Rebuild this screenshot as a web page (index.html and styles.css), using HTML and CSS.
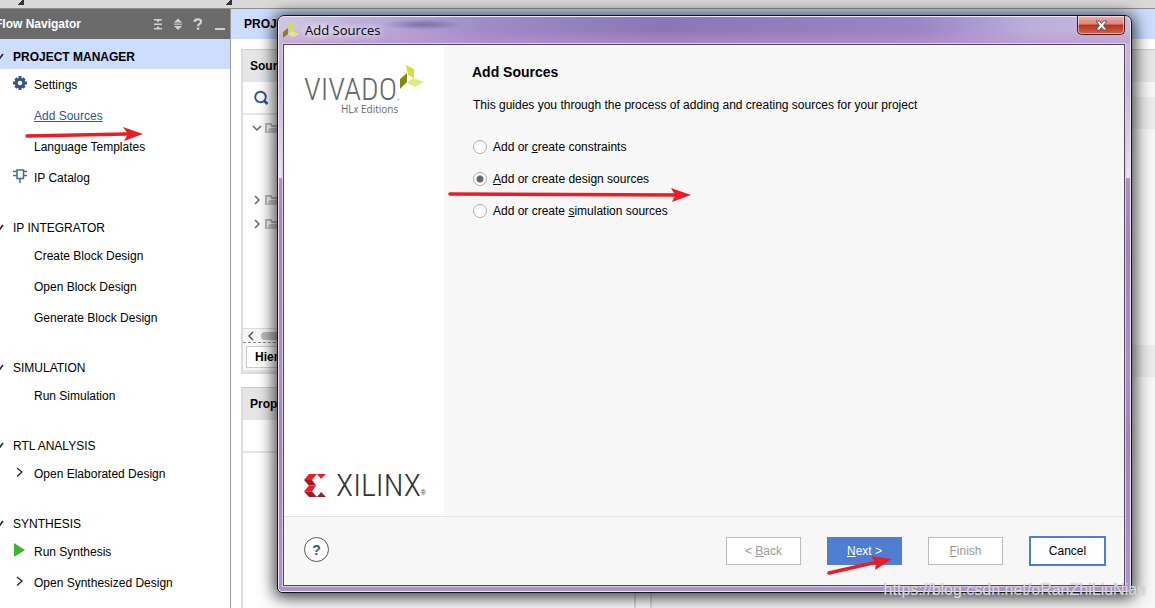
FILE: index.html
```
<!DOCTYPE html>
<html lang="en">
<head>
    <meta charset="UTF-8">
    <meta name="viewport" content="width=device-width, initial-scale=1.0">
    <title>Add Sources</title>
    <link rel="stylesheet" href="styles.css">
</head>
<body>
    <div class="toolstrip">
        <span class="grip grip-a"></span>
        <span class="grip grip-b"></span>
    </div>
    <div class="app">
        <nav class="flow">
            <div class="flow-title">
                <h2>Flow Navigator</h2>
                <svg width="72" height="16" viewBox="0 0 72 16" fill="#d2d2d2">
                    <path d="M1 3h8v1.500H6.500L5 6.500 3.500 4.500H1zM1 7.500h8v1.500H1zM1 13.500h8V12H6.500L5 10 3.500 12H1z"/>
                    <path d="M21 6.500l4-4 4 4zM21 10h8l-4 4z"/>
                    <path d="M21 7.500h8v1.500h-8z" fill="#b5b5b5"/>
                    <path d="M41.500 6q0-2.700 3.300-2.700T48 5.800q0 1.500-1.800 2.400-1.200.6-1.200 2" fill="none" stroke="#d2d2d2" stroke-width="2.200"/>
                    <path d="M43.800 11.500h2.400v2.200h-2.400zM62 12h10v2H62z"/>
                </svg>
            </div>
            <section class="group">
                <h3 class="active"><svg width="4" height="8" viewBox="0 0 4 8"><path d="M-2 3L0 5 3 1" fill="none" stroke="#222" stroke-width="1.600"/></svg>PROJECT MANAGER</h3>
                <ul>
                    <li>
                        <svg class="ico" width="14" height="14" viewBox="0 0 14 14"><g fill="#34548a"><circle cx="7" cy="7" r="5.200"/><path d="M5.500 0h3v14h-3zM0 5.500h14v3H0z"/><path d="M5.500 0.500h3v13h-3zM0.500 5.500h13v3h-13z" transform="rotate(45 7 7)"/></g><circle cx="7" cy="7" r="2.300" fill="#fff"/></svg>
                        <span>Settings</span>
                    </li>
                    <li><a href="#">Add Sources</a></li>
                    <li><span>Language Templates</span></li>
                    <li>
                        <svg class="ico" width="14" height="14" viewBox="0 0 14 14" fill="none" stroke="#4a6796"><path d="M4 1h6.500v8.500H4z" stroke-width="1.500"/><path d="M0 2.500h4M0 6.500h4M10.500 2.500H14M10.500 6.500H14M7 9.500V14" stroke-width="1.500"/></svg>
                        <span>IP Catalog</span>
                    </li>
                </ul>
            </section>
            <section class="group">
                <h3><svg width="4" height="8" viewBox="0 0 4 8"><path d="M-2 3L0 5 3 1" fill="none" stroke="#222" stroke-width="1.600"/></svg>IP INTEGRATOR</h3>
                <ul>
                    <li><span>Create Block Design</span></li>
                    <li><span>Open Block Design</span></li>
                    <li><span>Generate Block Design</span></li>
                </ul>
            </section>
            <section class="group">
                <h3><svg width="4" height="8" viewBox="0 0 4 8"><path d="M-2 3L0 5 3 1" fill="none" stroke="#222" stroke-width="1.600"/></svg>SIMULATION</h3>
                <ul>
                    <li><span>Run Simulation</span></li>
                </ul>
            </section>
            <section class="group">
                <h3><svg width="4" height="8" viewBox="0 0 4 8"><path d="M-2 3L0 5 3 1" fill="none" stroke="#222" stroke-width="1.600"/></svg>RTL ANALYSIS</h3>
                <ul>
                    <li>
                        <svg class="ico" width="14" height="14" viewBox="0 0 14 14"><path d="M4 3l5 4-5 4.500" fill="none" stroke="#222" stroke-width="1.300"/></svg>
                        <span>Open Elaborated Design</span>
                    </li>
                </ul>
            </section>
            <section class="group">
                <h3><svg width="4" height="8" viewBox="0 0 4 8"><path d="M-2 3L0 5 3 1" fill="none" stroke="#222" stroke-width="1.600"/></svg>SYNTHESIS</h3>
                <ul>
                    <li>
                        <svg class="ico" width="14" height="14" viewBox="0 0 14 14"><path d="M1 0l11 7-11 7z" fill="#3fb32f"/></svg>
                        <span>Run Synthesis</span>
                    </li>
                    <li>
                        <svg class="ico" width="14" height="14" viewBox="0 0 14 14"><path d="M4 3l5 4-5 4.500" fill="none" stroke="#222" stroke-width="1.300"/></svg>
                        <span>Open Synthesized Design</span>
                    </li>
                </ul>
            </section>
        </nav>

        <main class="work">
            <h1 class="work-title">PROJECT MANAGER</h1>
            <div class="panes">
                <div class="left-panes">
                    <section class="pane sources">
                        <h2>Sources</h2>
                        <div class="pane-tools">
                            <svg width="16" height="16" viewBox="0 0 16 16" fill="none" stroke="#34548a"><circle cx="7.500" cy="7" r="5.300" stroke-width="1.900"/><path d="M11 10.500l3.500 3.500" stroke-width="2.600"/></svg>
                        </div>
                        <div class="tree">
                            <svg class="open" width="26" height="12" viewBox="0 0 26 12"><path d="M2 4l4 4 4-4" fill="none" stroke="#666" stroke-width="1.500"/><path d="M15 11V2h5l1 2h6" fill="none" stroke="#bbb" stroke-width="2"/><path d="M16 11l2-5h9v5z" fill="#ccc"/></svg>
                            <svg width="26" height="12" viewBox="0 0 26 12"><path d="M4 2l4 4-4 4" fill="none" stroke="#666" stroke-width="1.500"/><path d="M15 11V2h5l1 2h6" fill="none" stroke="#bbb" stroke-width="2"/><path d="M16 11l2-5h9v5z" fill="#ccc"/></svg>
                            <svg width="26" height="12" viewBox="0 0 26 12"><path d="M4 2l4 4-4 4" fill="none" stroke="#666" stroke-width="1.500"/><path d="M15 11V2h5l1 2h6" fill="none" stroke="#bbb" stroke-width="2"/><path d="M16 11l2-5h9v5z" fill="#ccc"/></svg>
                        </div>
                        <div class="scroll">
                            <svg width="6" height="10" viewBox="0 0 6 10"><path d="M5 1L1 5l4 4" fill="none" stroke="#555" stroke-width="1.500"/></svg>
                            <span class="thumb"></span>
                        </div>
                        <div class="tabs"><span class="tab">Hierarchy</span></div>
                    </section>
                    <section class="pane props">
                        <h2>Properties</h2>
                        <div class="pane-tools"></div>
                    </section>
                </div>
                <section class="pane summary">
                    <h2></h2>
                    <div class="band"></div>
                    <div class="band low"></div>
                </section>
            </div>
        </main>
    </div>

    <div class="dialog" role="dialog" aria-labelledby="dlg-title">
        <header class="titlebar">
            <svg width="16" height="16" viewBox="0 0 16 16"><path d="M5 0l5 3v6L6 7z" fill="#d3df3a"/><path d="M0 10l5-4v6l-5 4z" fill="#858a0c"/><path d="M5 12l4-3 7 3-6 3z" fill="#e2ea7d"/></svg>
            <span id="dlg-title">Add Sources</span>
            <button class="close" aria-label="Close">
                <svg width="13" height="11" viewBox="0 0 13 11"><path d="M1 1h3.500l2 2.500 2-2.500H12L8.500 5.500 12 10H8.500l-2-2.500-2 2.500H1l3.500-4.500z" fill="#f4f4f4" stroke="#555a66"/></svg>
            </button>
        </header>
        <div class="client">
            <div class="wizard">
                <aside class="brand">
                    <div class="vivado">
                        <div class="vivado-name">VIVADO<small>.</small></div>
                        <svg width="24" height="24" viewBox="0 0 24 24"><path d="M6 0l8 4v9l-6-3z" fill="#d3df3a"/><path d="M0 14l7-6v9l-7 7z" fill="#858a0c"/><path d="M7 18l6-5 11 4-9 5z" fill="#e2ea7d"/></svg>
                        <div class="edition">HL<i>x</i> Editions</div>
                    </div>
                    <div class="xilinx">
                        <svg width="22" height="23" viewBox="0 0 22 23"><path d="M5 0h8L8 6H0z" fill="#ed1c24"/><path d="M13 0h9l-5 5z" fill="#ed1c24"/><path d="M0 6h8l4 5.500H5z" fill="#9c1c22"/><path d="M5 11.500h7L8 17.500H0z" fill="#ed1c24"/><path d="M0 17.500h8l5 5.500H5zM17 18l5 5h-9z" fill="#9c1c22"/></svg>
                        <span class="xilinx-name">XILINX</span><small>®</small>
                    </div>
                </aside>
                <form class="step">
                    <h2>Add Sources</h2>
                    <p>This guides you through the process of adding and creating sources for your project</p>
                    <label><input type="radio" name="kind"><span>Add or <u>c</u>reate constraints</span></label>
                    <label><input type="radio" name="kind" checked><span><u>A</u>dd or create design sources</span></label>
                    <label><input type="radio" name="kind"><span>Add or create <u>s</u>imulation sources</span></label>
                </form>
            </div>
            <footer class="actions">
                <button class="help">?</button>
                <button class="btn" disabled>&lt; <u>B</u>ack</button>
                <button class="btn next"><u>N</u>ext &gt;</button>
                <button class="btn" disabled><u>F</u>inish</button>
                <button class="btn cancel">Cancel</button>
            </footer>
        </div>
    </div>

    <!-- red marker arrows -->
    <svg class="mark mark-add" width="120" height="16" viewBox="0 0 120 16"><path d="M2 10L102 8" stroke="#ed1c24" stroke-width="3.500" stroke-linecap="round"/><path d="M98 1l20 7-19 7 4-7z" fill="#ed1c24"/></svg>
    <svg class="mark mark-design" width="244" height="16" viewBox="0 0 244 16"><path d="M2 7L228 8" stroke="#ed1c24" stroke-width="3.500" stroke-linecap="round"/><path d="M223 1l20 7-19 7 3-7z" fill="#ed1c24"/></svg>
    <svg class="mark mark-next" width="66" height="22" viewBox="0 0 66 22"><path d="M2 18L50 7" stroke="#ed1c24" stroke-width="3.500" stroke-linecap="round"/><path d="M44 1l21 3-17 11 1-7z" fill="#ed1c24"/></svg>
    <div class="watermark">https://blog.csdn.net/oRanZhiLiuNian</div>
</body>
</html>
```
FILE: styles.css
```
* {
    box-sizing: border-box;
}
body {
    display: flex;
    flex-direction: column;
    height: 100vh;
    margin: 0;
    overflow: hidden;
    font: 12px/16px "Liberation Sans", Arial, sans-serif;
    color: #000;
    background: #fff;
}
h1, h2, h3, p, ul {
    margin: 0;
    padding: 0;
    font-size: 12px;
}
ul {
    list-style: none;
}
svg {
    display: block;
    flex: none;
}
.toolstrip {
    display: flex;
    flex: none;
    height: 9px;
    background: #dadada;
    border-bottom: 1px solid #8e8e8e;
}
.grip {
    width: 6px;
    height: 5px;
    background: linear-gradient(135deg, transparent 45%, #333 45%);
}
.grip-a {
    margin-left: 18px;
}
.grip-b {
    margin-left: 202px;
}
.app {
    display: flex;
    flex: 1;
    min-height: 0;
}

/* flow navigator */
.flow {
    width: 231px;
    flex: none;
    overflow: hidden;
    border-right: 1px solid #999;
}
.flow-title {
    display: flex;
    align-items: center;
    justify-content: space-between;
    height: 30px;
    padding-right: 5px;
    color: #fff;
    background: #6b6b6b;
}
.flow-title h2 {
    margin-left: -5px;
}
.group {
    margin-bottom: 17px;
}
.group h3 {
    display: flex;
    align-items: center;
    gap: 9px;
    height: 30px;
    padding-top: 5px;
    font-weight: normal;
}
.group h3.active {
    font-weight: bold;
    background: #ccddff;
}
.group li {
    display: flex;
    align-items: center;
    height: 31px;
    padding-left: 34px;
}
.group .ico {
    margin: 0 7px 3px -21px;
}
.group a {
    color: #34548a;
}

/* work area behind the dialog */
.work {
    display: flex;
    flex: 1;
    flex-direction: column;
    min-width: 0;
}
.work-title {
    height: 30px;
    padding-left: 13px;
    line-height: 30px;
    background: #ccddff;
}
.panes {
    display: flex;
    flex: 1;
    gap: 14px;
    padding: 10px 0 0 10px;
}
.left-panes {
    display: flex;
    flex-direction: column;
    gap: 13px;
    width: 395px;
}
.pane {
    border: 2px solid #dcdcdc;
    border-top: 1px solid #ccc;
}
.pane h2 {
    height: 32px;
    padding-left: 7px;
    line-height: 32px;
    background: #e6e6e6;
}
.pane-tools {
    height: 33px;
    padding: 8px 10px;
    border-bottom: 2px solid #e6e6e6;
}
.sources {
    display: flex;
    flex-direction: column;
    height: 325px;
}
.tree {
    display: flex;
    flex: 1;
    flex-direction: column;
    gap: 12px;
    padding: 7px 8px;
}
.tree .open {
    margin-bottom: 48px;
}
.scroll {
    display: flex;
    align-items: center;
    gap: 7px;
    height: 14px;
    padding-left: 5px;
    border-top: 1px solid #ddd;
    background: #f7f7f7;
}
.thumb {
    width: 200px;
    height: 8px;
    border-radius: 4px;
    background: #bbb;
}
.tabs {
    padding: 3px 3px 2px;
    border-top: 1px dashed #888;
    border-bottom: 2px solid #e6e6e6;
    background: #f7f7f7;
}
.tab {
    display: inline-block;
    padding: 2px 8px;
    font-weight: bold;
    border: 1px solid #ccc;
    background: #fff;
}
.props {
    flex: 1;
    border-bottom: 0;
}
.summary {
    flex: 1;
    border-right: 0;
    border-bottom: 0;
    background: #f7f7f7;
}
.band {
    height: 32px;
    margin-top: 15px;
    background: #ebebeb;
}
.band.low {
    margin-top: 216px;
}

/* dialog window */
.dialog {
    position: absolute;
    top: 15px;
    right: 23px;
    bottom: 15px;
    left: 277px;
    display: flex;
    flex-direction: column;
    padding: 0 6px 6px 5px;
    border: 1px solid #15101c;
    border-radius: 7px 7px 5px 5px;
    background:
        radial-gradient(closest-side, rgba(70, 50, 110, .45), transparent) 105px 3px / 80px 11px no-repeat,
        linear-gradient(transparent 50%, rgba(190, 150, 205, .6)) 0 0 / 100% 28px no-repeat,
        linear-gradient(90deg, #d3c6e2, #b8a8d8 12%, #9d8ac6 25%, #8a76b6 45%, #927dbd 60%, #9a85c6 75%, #bcaedb 88%, #c8b8dc) 0 0 / 100% 28px no-repeat,
        linear-gradient(#cdbbe0, #c5b0dc 60px, #eae2f2 162px, #ab8fc8 162px, #a283bb 230px, #ab90c8 360px, #a283bb 420px, #ae94cc);
    box-shadow: inset 0 0 0 1px #efe8f6, 0 2px 16px 3px rgba(0, 0, 0, .75);
}
.titlebar {
    display: flex;
    align-items: center;
    gap: 6px;
    height: 28px;
    flex: none;
    font: 13px/18px "Open Sans", "Noto Sans", sans-serif;
}
#dlg-title {
    flex: 1;
    text-shadow: 0 0 6px #fff, 0 0 8px #fff;
}
.close {
    display: flex;
    align-items: center;
    justify-content: center;
    align-self: flex-start;
    width: 48px;
    height: 19px;
    padding: 0;
    border: 1px solid #4b1a1c;
    border-top: 0;
    border-radius: 0 0 5px 5px;
    background: linear-gradient(#eeb0a8, #dc8478 45%, #b8301f 50%, #d8604c);
    box-shadow: inset 0 0 0 1px rgba(255, 255, 255, .5);
}
.client {
    display: flex;
    flex: 1;
    flex-direction: column;
    border: 1px solid #51445f;
    background: #f7f7f7;
    box-shadow: 0 0 0 1px #dccfe8;
}
.wizard {
    display: flex;
    flex: 1;
}
.brand {
    display: flex;
    flex-direction: column;
    justify-content: space-between;
    width: 160px;
    padding: 20px 20px 15px;
    background: #fff;
}
.vivado {
    display: grid;
    grid-template-columns: 96px 24px;
    color: #666;
}
.vivado-name {
    height: 38px;
    padding-top: 8px;
    font: 300 31px/34px "Liberation Sans Narrow", "Roboto Condensed", Roboto, sans-serif;
    white-space: nowrap;
}
.vivado-name small {
    font-size: 12px;
}
.edition {
    grid-column: 1 / 3;
    padding-left: 37px;
    font: 10px/12px "Open Sans", sans-serif;
}
.xilinx {
    display: flex;
    align-items: center;
    color: #333;
}
.xilinx-name {
    margin-left: 10px;
    font: 300 32px/32px "Liberation Sans Narrow", "Roboto Condensed", Roboto, sans-serif;
}
.xilinx small {
    align-self: flex-end;
    font-size: 7px;
}
.step {
    flex: 1;
    padding: 19px 28px;
}
.step h2 {
    font-size: 14px;
}
.step p {
    margin: 17px 0 26px;
}
.step label {
    display: flex;
    align-items: center;
    gap: 6px;
    margin-bottom: 16px;
}
.step p, .step label {
    padding-left: 1px;
}
.step input {
    width: 14px;
    height: 14px;
    margin: 0;
    appearance: none;
    border: 1px solid #aaa;
    border-radius: 50%;
    background: #fff;
}
.step input:checked {
    background: radial-gradient(circle, #666 3px, #fff 4px);
}
.actions {
    display: flex;
    align-items: flex-start;
    gap: 26px;
    height: 69px;
    padding: 20px 18px 0 20px;
    border-top: 1px solid #e4e4e4;
}
.help {
    width: 25px;
    height: 25px;
    margin-right: auto;
    padding: 0;
    font: bold 14px/16px "Liberation Sans", Arial, sans-serif;
    color: #34548a;
    border: 1px solid #555;
    border-radius: 50%;
    background: #fff;
}
.btn {
    width: 75px;
    height: 28px;
    padding: 0;
    font: 12px/16px "Liberation Sans", Arial, sans-serif;
    color: #000;
    border: 1px solid #bbb;
    background: #fff;
}
.btn:disabled {
    color: #999;
}
.next {
    color: #fff;
    border-color: #4f7dd1;
    background: #4f7dd1;
}
.cancel {
    width: 77px;
    height: 30px;
    margin-top: -1px;
    border: 2px solid #4f7dd1;
}

.mark {
    position: absolute;
}
.mark-add {
    top: 126px;
    left: 25px;
}
.mark-design {
    top: 187px;
    left: 448px;
}
.mark-next {
    top: 555px;
    left: 827px;
}
.watermark {
    position: absolute;
    right: 9px;
    bottom: 9px;
    font-size: 16px;
    line-height: 18px;
    color: rgba(255, 255, 255, .7);
    text-shadow: 0 0 1px #888;
}
```
